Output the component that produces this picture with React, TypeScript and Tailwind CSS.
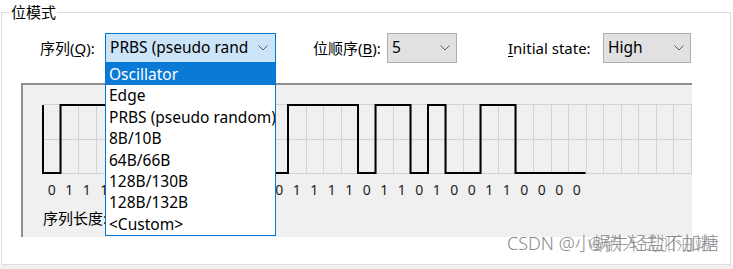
import React from "react";

const BITS = [0,1,1,1,0,0,1,0,0,0,1,0,1,0,1,1,1,1,0,1,1,0,1,0,0,1,1,0,0,0,0];
const ITEMS = ["Oscillator","Edge","PRBS (pseudo random)","8B/10B","64B/66B","128B/130B","128B/132B","<Custom>"];

function Chevron() {
  return (
    <svg width="10" height="6" viewBox="0 0 10 6" className="shrink-0">
      <polyline points="0.5,0.5 5,5 9.5,0.5" fill="none" stroke="#5f5f5f" strokeWidth="1" />
    </svg>
  );
}

function Wave() {
  const x0 = 20, w = 17.5, hi = 20, lo = 88;
  let y = hi;
  let d = `M ${x0} ${hi}`;
  BITS.forEach((b, k) => {
    const ny = b ? hi : lo;
    const x = x0 + k * w;
    if (ny !== y) { d += ` L ${x} ${ny}`; y = ny; }
    d += ` L ${x + w} ${y}`;
  });
  const vlines = [];
  for (let k = 0; k <= 37; k++) vlines.push(x0 + k * w);
  return (
    <svg width="669" height="92" viewBox="0 0 669 92" className="block">
      {[19.5, 54.5, 88.5].map((yy) => (
        <line key={yy} x1={x0} x2={669} y1={yy} y2={yy} stroke="#d2d2d2" strokeWidth="1" />
      ))}
      {vlines.map((x) => (
        <line key={x} x1={Math.round(x) + 0.5} x2={Math.round(x) + 0.5} y1={19.5} y2={88.5} stroke="#d2d2d2" strokeWidth="1" />
      ))}
      <path d={d} fill="none" stroke="#000" strokeWidth="2" strokeLinejoin="miter" />
    </svg>
  );
}

export default function App() {
  return (
    <div className="relative w-[733px] h-[269px] bg-white overflow-hidden flex flex-col font-['Noto_Sans','Noto_Sans_CJK_SC',sans-serif] text-[15px] text-black">
      <fieldset className="ml-[1px] w-[730px] border border-[#dcdcdc] pb-[27px]">
        <legend className="ml-[8px] px-[1px] leading-[24px]">位模式</legend>
        <div className="mt-[9px] flex items-center pl-[38px] h-[30px]">
          <div className="w-[65px]">序列(<span className="underline underline-offset-2">Q</span>):</div>
          <div className="relative w-[171px] h-[30px]">
            <div className="h-full border border-[#0078d7] bg-[#cce4f7] flex items-center justify-between pl-[4px] pr-[7px] text-[15.5px]">
              <span className="whitespace-nowrap">PRBS (pseudo rand</span>
              <Chevron />
            </div>
            <div className="absolute left-0 top-full w-full z-10 border border-[#0078d7] bg-white text-[15.5px]">
              {ITEMS.map((t, i) => (
                <div
                  key={t}
                  className={
                    "h-[21.4px] leading-[21.4px] pl-[3px] whitespace-nowrap overflow-hidden " +
                    (i === 0 ? "bg-[#0a7ad6] text-white" : "text-black")
                  }
                >
                  {t}
                </div>
              ))}
            </div>
          </div>
          <div className="ml-[37px] w-[74px]">位顺序(<span className="underline underline-offset-2">B</span>):</div>
          <div className="w-[70px] h-[30px] border border-[#adadad] bg-[#e1e1e1] flex items-center justify-between pl-[4px] pr-[6px] text-[15.5px]">
            <span>5</span>
            <Chevron />
          </div>
          <div className="ml-[51px] w-[95px]"><span className="underline underline-offset-2">I</span>nitial state:</div>
          <div className="w-[88px] h-[30px] border border-[#adadad] bg-[#e1e1e1] flex items-center justify-between pl-[4px] pr-[6px] text-[15.5px]">
            <span>High</span>
            <Chevron />
          </div>
        </div>
        <div className="mt-[20px] ml-[19px] w-[671px] h-[154px] border-t-2 border-l-2 border-[#8f8f8f] bg-[#f0f0f0]">
          <Wave />
          <div className="mt-[5px] flex pl-[20px] text-[14px] leading-[16px] text-[#1e1e1e]">
            {BITS.map((b, i) => (
              <span key={i} className="w-[17.5px] text-center">{b}</span>
            ))}
          </div>
          <div className="mt-[10px] pl-[20px] leading-[20px]">序列长度: 31</div>
        </div>
      </fieldset>
      <div className="flex-1 bg-[#f0f0f0]" />
      <div className="absolute left-[507px] top-[232px] text-[18px] leading-[22px] text-[#8a8a8a] font-light whitespace-nowrap">
        CSDN @小蜗牛轻盐不加糖
      </div>
      <div className="absolute left-[588px] top-[232px] text-[18px] leading-[22px] text-[#8a8a8a]/80 font-light whitespace-nowrap">
        @嵌入式加油站
      </div>
    </div>
  );
}
